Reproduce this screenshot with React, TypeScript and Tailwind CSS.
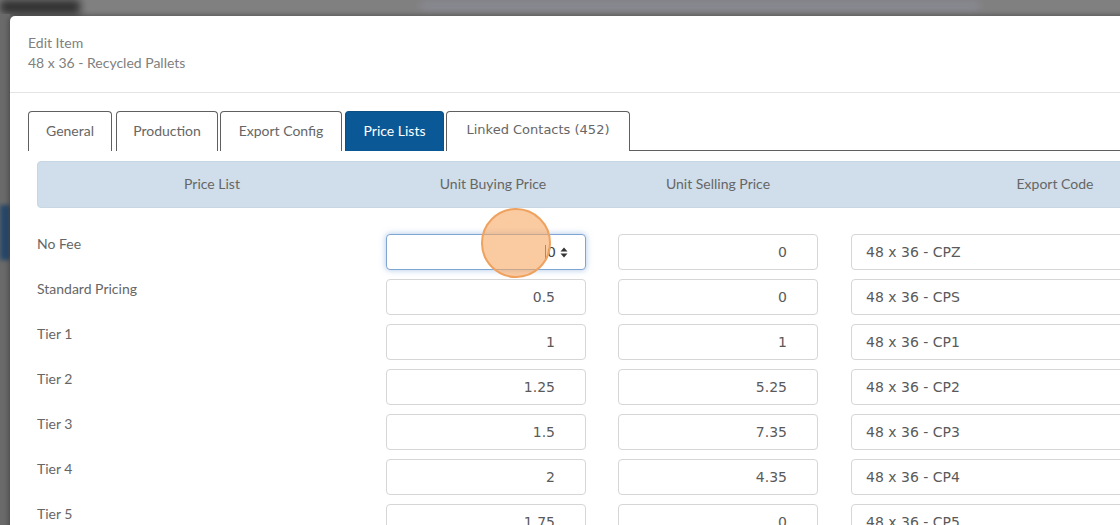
const rows = [
  { name: "No Fee", buy: "0", sell: "0", code: "48 x 36 - CPZ", focused: true },
  { name: "Standard Pricing", buy: "0.5", sell: "0", code: "48 x 36 - CPS" },
  { name: "Tier 1", buy: "1", sell: "1", code: "48 x 36 - CP1" },
  { name: "Tier 2", buy: "1.25", sell: "5.25", code: "48 x 36 - CP2" },
  { name: "Tier 3", buy: "1.5", sell: "7.35", code: "48 x 36 - CP3" },
  { name: "Tier 4", buy: "2", sell: "4.35", code: "48 x 36 - CP4" },
  { name: "Tier 5", buy: "1.75", sell: "0", code: "48 x 36 - CP5" },
];

const tabs = [
  { label: "General", w: "w-[84px]", mr: "mr-[4px]" },
  { label: "Production", w: "w-[102px]", mr: "mr-[2px]" },
  { label: "Export Config", w: "w-[122px]", mr: "mr-[3px]" },
  { label: "Price Lists", w: "w-[99px]", mr: "mr-[2px]", active: true },
  { label: "Linked Contacts (452)", w: "w-[184px]", mr: "", mono: true },
];

function NumberBox({ value, focused }: { value: string; focused?: boolean }) {
  if (focused) {
    return (
      <div className="relative flex h-[36px] w-[200px] shrink-0 items-center justify-end rounded-[4px] border border-[#7fa6d3] bg-white pr-[17px] shadow-[0_0_6px_rgba(102,150,210,0.55)] font-['DejaVu_Sans',sans-serif] text-[14px] text-[#444]">
        <span className="mr-[1px] h-[15px] w-px bg-[#555]" />
        <span>{value}</span>
        <svg width="8" height="11" viewBox="0 0 8 11" className="ml-[4px]">
          <path d="M4 0.5 L7.5 4.5 L0.5 4.5 Z" fill="#333" />
          <path d="M4 10.5 L7.5 6.5 L0.5 6.5 Z" fill="#333" />
        </svg>
        {/* pointer highlight */}
        <div className="absolute left-[94px] top-[-27px] h-[70px] w-[70px] rounded-full border-2 border-[#efa15e] bg-[rgba(247,166,98,0.6)]" />
      </div>
    );
  }
  return (
    <div className="flex h-[36px] w-[200px] shrink-0 items-center justify-end rounded-[4px] border border-[#d6d6d6] bg-white pr-[30px] font-['DejaVu_Sans',sans-serif] text-[14px] text-[#5a5a5a]">
      {value}
    </div>
  );
}

export default function App() {
  return (
    <div className="relative h-[525px] w-[1120px] overflow-hidden bg-[#808080] pl-[10px] pt-[16px] font-['Lato',sans-serif]">
      {/* blurred page behind the modal */}
      <div className="absolute left-0 top-0 h-[14px] w-[80px] bg-[#2e2e2e] blur-[4px]" />
      <div className="absolute left-[420px] top-[2px] h-[8px] w-[560px] bg-[#8a8a96] blur-[4px]" />
      <div className="absolute left-0 top-[14px] h-[520px] w-[10px] bg-[#6a6a6a]" />
      <div className="absolute left-0 top-[205px] h-[55px] w-[10px] bg-[#27486a] blur-[2px]" />

      <div className="relative h-[560px] w-[1300px] rounded-tl-[5px] bg-white shadow-[0_0_6px_rgba(0,0,0,0.45)]">
        <div className="border-b border-[#e5e5e5] px-[18px] pb-[19px] pt-[17px] text-[14px] leading-[20px] text-[#808080]">
          <div>Edit Item</div>
          <div>48 x 36 - Recycled Pallets</div>
        </div>

        <div className="px-[18px] pt-[18px]">
          <div className="flex h-[40px] items-stretch">
            {tabs.map((t) => (
              <div
                key={t.label}
                className={`${t.w} ${t.mr} flex shrink-0 items-center justify-center rounded-t-[4px] border border-b-0 pb-[3px] ${
                  t.active
                    ? "border-[#0b4f85] bg-[#0b5896] text-white"
                    : "border-[#5f5f5f] bg-white text-[#666]"
                } ${t.mono ? "font-['DejaVu_Sans',sans-serif] text-[13px]" : "text-[14px]"}`}
              >
                {t.label}
              </div>
            ))}
            <div className="flex-1 border-b border-[#5f5f5f]" />
          </div>

          <div className="ml-[9px] mt-[10px]">
            <div className="flex h-[47px] items-center rounded-[4px] border border-[#c6d6e3] bg-[#cfdeea] pb-[2px] text-[14px] text-[#666]">
              <div className="w-[348px] shrink-0 text-center">Price List</div>
              <div className="w-[214px] shrink-0 text-center">Unit Buying Price</div>
              <div className="w-[236px] shrink-0 text-center">Unit Selling Price</div>
              <div className="w-[438px] shrink-0 text-center">Export Code</div>
            </div>

            <div className="mt-[26px] flex flex-col gap-[9px]">
              {rows.map((r) => (
                <div key={r.name} className="flex items-start">
                  <div className="w-[349px] shrink-0 text-[14px] leading-[20px] text-[#666]">{r.name}</div>
                  <NumberBox value={r.buy} focused={r.focused} />
                  <div className="ml-[32px] shrink-0">
                    <NumberBox value={r.sell} />
                  </div>
                  <div className="ml-[33px] flex h-[36px] w-[360px] shrink-0 items-center rounded-[4px] border border-[#d6d6d6] bg-white pl-[14px] font-['DejaVu_Sans',sans-serif] text-[14px] text-[#5a5a5a]">
                    {r.code}
                  </div>
                </div>
              ))}
            </div>
          </div>
        </div>
      </div>
    </div>
  );
}
